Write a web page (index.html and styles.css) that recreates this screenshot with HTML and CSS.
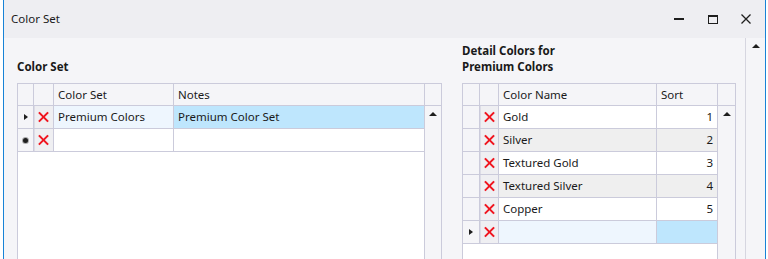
FILE: index.html
```html
<!DOCTYPE html>
<html>

<head>
    <title>Color Set</title>
    <link rel="stylesheet" href="styles.css">
</head>

<body>
    <div class="window">
        <div class="titlebar">
            <span class="title">Color Set</span>
            <div class="controls">
                <span class="btn min"></span>
                <span class="btn max"></span>
                <span class="btn close">
                    <svg width="10" height="10" viewBox="0 0 10 10"><path d="M0.5 0.5L9.5 9.5M9.5 0.5L0.5 9.5" stroke="#1e1e1e" stroke-width="1.3" /></svg>
                </span>
            </div>
        </div>
        <div class="content">
            <div class="pane left">
                <div class="heading"><span>Color Set</span></div>
                <div class="grid">
                    <div class="row head">
                        <div class="c rh"></div>
                        <div class="c del"></div>
                        <div class="c set">Color Set</div>
                        <div class="c notes">Notes</div>
                        <div class="c sb"></div>
                    </div>
                    <div class="body">
                        <div class="rows">
                            <div class="row">
                                <div class="c rh"><span class="arrow"></span></div>
                                <div class="c del"><span class="x"></span></div>
                                <div class="c set current">Premium Colors</div>
                                <div class="c notes selected">Premium Color Set</div>
                            </div>
                            <div class="row">
                                <div class="c rh"><span class="star"></span></div>
                                <div class="c del"><span class="x"></span></div>
                                <div class="c set"></div>
                                <div class="c notes"></div>
                            </div>
                        </div>
                        <div class="vscroll"><span class="up"></span></div>
                    </div>
                </div>
            </div>

            <div class="pane right">
                <div class="heading"><span>Detail Colors for<br>Premium Colors</span></div>
                <div class="grid">
                    <div class="row head">
                        <div class="c rh"></div>
                        <div class="c del"></div>
                        <div class="c cname">Color Name</div>
                        <div class="c sort">Sort</div>
                        <div class="c sb"></div>
                    </div>
                    <div class="body">
                        <div class="rows">
                            <div class="row">
                                <div class="c rh"></div>
                                <div class="c del"><span class="x"></span></div>
                                <div class="c cname">Gold</div>
                                <div class="c sort num">1</div>
                            </div>
                            <div class="row alt">
                                <div class="c rh"></div>
                                <div class="c del"><span class="x"></span></div>
                                <div class="c cname">Silver</div>
                                <div class="c sort num">2</div>
                            </div>
                            <div class="row">
                                <div class="c rh"></div>
                                <div class="c del"><span class="x"></span></div>
                                <div class="c cname">Textured Gold</div>
                                <div class="c sort num">3</div>
                            </div>
                            <div class="row alt">
                                <div class="c rh"></div>
                                <div class="c del"><span class="x"></span></div>
                                <div class="c cname">Textured Silver</div>
                                <div class="c sort num">4</div>
                            </div>
                            <div class="row">
                                <div class="c rh"></div>
                                <div class="c del"><span class="x"></span></div>
                                <div class="c cname">Copper</div>
                                <div class="c sort num">5</div>
                            </div>
                            <div class="row">
                                <div class="c rh"><span class="arrow"></span></div>
                                <div class="c del"><span class="x"></span></div>
                                <div class="c cname current"></div>
                                <div class="c sort selected"></div>
                            </div>
                        </div>
                        <div class="vscroll"><span class="up"></span></div>
                    </div>
                </div>
            </div>

            <div class="outer-scroll"><span class="up"></span></div>
        </div>
    </div>
</body>

</html>
```

FILE: styles.css
```css
body {
    margin: 0;
    background-color: white;
    font-family: 'Segoe UI', 'Noto Sans', sans-serif;
    font-size: 11.5px;
    color: #1a1a1a;
    overflow: hidden;
}

.window {
    margin-left: 3px;
    width: 761px;
    height: 259px;
    border-left: 1px solid #1883d7;
    border-right: 1px solid #1883d7;
    display: flex;
    flex-direction: column;
}

.titlebar {
    height: 38px;
    flex-shrink: 0;
    background-color: #eeeef2;
    display: flex;
    align-items: center;
    justify-content: space-between;
    padding-left: 7px;
}

.title {
    padding-bottom: 1px;
}

.controls {
    display: flex;
    align-items: center;
    height: 100%;
}

.btn {
    width: 34px;
    height: 100%;
    display: flex;
    align-items: center;
    justify-content: center;
}

.btn.min::before {
    content: '';
    width: 10px;
    height: 2px;
    background-color: #1e1e1e;
}

.btn.max::before {
    content: '';
    width: 8px;
    height: 6px;
    border: 1px solid #1e1e1e;
    border-top-width: 2px;
}

.btn.close {
    width: 32px;
    margin-right: 3px;
}

.content {
    flex: 1;
    display: flex;
    background-color: #f5f5f8;
    padding-left: 13px;
    min-height: 0;
}

.pane {
    display: flex;
    flex-direction: column;
}

.pane.left {
    width: 425px;
    margin-right: 20px;
}

.pane.right {
    width: 274px;
    margin-right: 9px;
}

.heading {
    height: 32px;
    margin-top: 5px;
    margin-bottom: 8px;
    display: flex;
    align-items: flex-end;
    font-weight: bold;
    line-height: 16px;
}

.grid {
    flex: 1;
    display: flex;
    flex-direction: column;
    border: 1px solid #cbcbdb;
    border-bottom: none;
    background-color: white;
    min-height: 0;
}

.row {
    display: flex;
    height: 23px;
    flex-shrink: 0;
}

.row.head {
    height: 22px;
    background-color: #f5f5f8;
}

.c {
    box-sizing: border-box;
    height: 100%;
    border-right: 1px solid #cbcbdb;
    border-bottom: 1px solid #cbcbdb;
    padding: 0 4px 1px;
    display: flex;
    align-items: center;
    white-space: nowrap;
    flex-shrink: 0;
}

.c.rh {
    background-color: #f5f5f8;
    justify-content: center;
    padding: 0;
}

.c.del {
    background-color: #f5f5f8;
    justify-content: center;
    padding: 0;
}

.row:not(.head) .c.del {
    background-color: #efeff2;
    box-shadow: inset 1px 0 0 #dcdce6;
}

.c.sb {
    border-right: none;
    width: 16px;
    padding: 0;
}

.body {
    flex: 1;
    display: flex;
    min-height: 0;
}

.rows {
    border-right: 1px solid #cbcbdb;
}

.rows .c:last-child {
    border-right: none;
}

.vscroll {
    width: 16px;
    background-color: #f5f5f8;
    display: flex;
    justify-content: center;
}

.up {
    margin-top: 6px;
    width: 0;
    height: 0;
    border-left: 4px solid transparent;
    border-right: 4px solid transparent;
    border-bottom: 4px solid #1e1e1e;
}

/* left grid columns */
.left .rh { width: 16px; }
.left .del { width: 20px; }
.left .set { width: 120px; }
.left .notes { width: 251px; }
.left .rows .notes { width: 250px; }

/* right grid columns */
.right .rh { width: 17px; }
.right .del { width: 19px; }
.right .cname { width: 158px; }
.right .sort { width: 61px; }
.right .rows .sort { width: 60px; }

.right .vscroll {
    width: 17px;
}

.right .c.sb {
    width: 17px;
}

.num {
    justify-content: flex-end;
}

.row.alt .cname,
.row.alt .sort {
    background-color: #efefef;
}

.current {
    background-color: #eef6fe;
}

.selected {
    background-color: #bee6fd;
}

.arrow {
    width: 0;
    height: 0;
    border-top: 3px solid transparent;
    border-bottom: 3px solid transparent;
    border-left: 4px solid #1e1e1e;
}

.star {
    width: 5px;
    height: 5px;
    border-radius: 50%;
    background-color: #1e1e1e;
    box-shadow: 0 0 0 1px rgba(30, 30, 30, 0.35);
}

.x {
    position: relative;
    width: 11px;
    height: 11px;
}

.x::before,
.x::after {
    content: '';
    position: absolute;
    left: -1px;
    top: 4.5px;
    width: 13px;
    height: 2px;
    background-color: #f0141e;
    transform: rotate(45deg);
}

.x::after {
    transform: rotate(-45deg);
}

.outer-scroll {
    width: 19px;
    border-left: 1px solid #d6d6e0;
    display: flex;
    justify-content: center;
}

.outer-scroll .up {
    margin-top: 6px;
}
```
